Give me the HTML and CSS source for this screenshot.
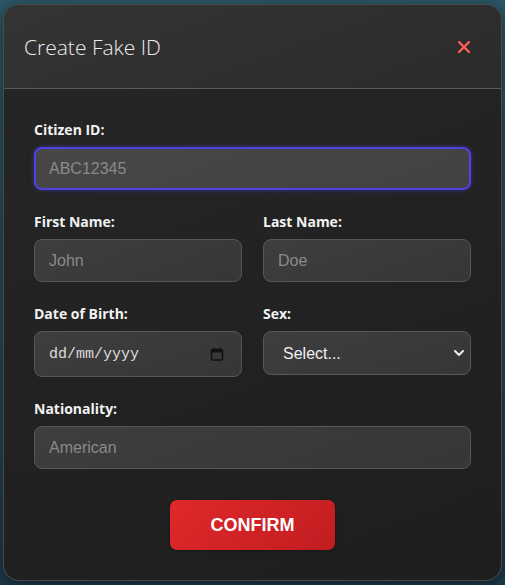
FILE: index.html
```html
<!DOCTYPE html>
<html lang="en">
<head>
  <meta charset="UTF-8">
  <title>Create Fake ID</title>
  <link rel="stylesheet" href="styles.css">
</head>
<body>
  <div class="modal">
    <div class="modal-header">
      <h2>Create Fake ID</h2>
      <button type="button" class="close-btn" aria-label="Close">
        <svg width="14" height="14" viewBox="0 0 14 14"><path d="M2 2L12 12M12 2L2 12" stroke="#ff5c5c" stroke-width="2.4" stroke-linecap="round"/></svg>
      </button>
    </div>
    <form class="modal-body" id="idForm">
      <div class="field">
        <label for="citizenId">Citizen ID:</label>
        <input type="text" id="citizenId" class="input focused" placeholder="ABC12345">
      </div>

      <div class="row">
        <div class="field">
          <label for="firstName">First Name:</label>
          <input type="text" id="firstName" class="input" placeholder="John">
        </div>
        <div class="field">
          <label for="lastName">Last Name:</label>
          <input type="text" id="lastName" class="input" placeholder="Doe">
        </div>
      </div>

      <div class="row">
        <div class="field">
          <label for="dob">Date of Birth:</label>
          <div class="input date-box">
            <input type="text" id="dob" class="date-text" placeholder="dd/mm/yyyy">
            <svg width="14" height="14" viewBox="0 0 14 14" class="cal-icon"><rect x="1.5" y="2.5" width="11" height="10.5" rx="1" fill="none" stroke="#111" stroke-width="1.6"/><rect x="1.5" y="2.5" width="11" height="3" fill="#111"/><path d="M4 0.8V3M10 0.8V3" stroke="#111" stroke-width="1.5"/></svg>
          </div>
        </div>
        <div class="field">
          <label for="sex">Sex:</label>
          <div class="select-wrap">
            <select id="sex" class="input select">
              <option value="">Select...</option>
              <option value="M">Male</option>
              <option value="F">Female</option>
            </select>
            <svg width="12" height="8" viewBox="0 0 12 8" class="chevron"><path d="M2 2L6 6L10 2" fill="none" stroke="#eee" stroke-width="2" stroke-linecap="round" stroke-linejoin="round"/></svg>
          </div>
        </div>
      </div>

      <div class="field">
        <label for="nationality">Nationality:</label>
        <input type="text" id="nationality" class="input" placeholder="American">
      </div>

      <div class="actions">
        <button type="button" class="confirm-btn">CONFIRM</button>
      </div>
    </form>
  </div>
</body>
</html>
```

FILE: styles.css
```css
html, body {
  margin: 0;
  height: 100%;
}
body {
  background: linear-gradient(180deg, #2c5767 0%, #24485a 60%, #1d3b4a 100%);
  font-family: "Liberation Sans", Arial, sans-serif;
  padding: 4px 3px;
  box-sizing: border-box;
}
.modal {
  width: 499px;
  height: 577px;
  box-sizing: border-box;
  border: 1px solid #4a4a4a;
  border-radius: 16px;
  overflow: hidden;
  background: linear-gradient(160deg, #262626 0%, #1e1e1e 100%);
  box-shadow: 0 4px 16px rgba(0,0,0,0.5);
}
.modal-header {
  height: 84px;
  box-sizing: border-box;
  display: flex;
  align-items: center;
  justify-content: space-between;
  padding: 0 30px 0 20px;
  background: linear-gradient(160deg, #343434 0%, #2b2b2b 100%);
  border-bottom: 1px solid #5a5a5a;
}
.modal-header h2 {
  margin: 0;
  font-family: "Open Sans", sans-serif;
  font-weight: 300;
  font-size: 21px;
  color: #ececec;
}
.close-btn {
  background: none;
  border: none;
  padding: 0;
  width: 14px;
  height: 14px;
  cursor: pointer;
  display: flex;
}
.modal-body {
  padding: 31px 30px 0;
  margin: 0;
}
.field {
  display: flex;
  flex-direction: column;
  margin-bottom: 22px;
  min-width: 0;
}
label {
  font-family: "Open Sans", sans-serif;
  font-weight: 700;
  font-size: 14px;
  line-height: 20px;
  color: #f2f2f2;
  margin-bottom: 7px;
}
.row {
  display: grid;
  grid-template-columns: minmax(0, 1fr) minmax(0, 1fr);
  column-gap: 21px;
  align-items: start;
}
.input {
  height: 43px;
  box-sizing: border-box;
  width: 100%;
  padding: 0 14px;
  background: linear-gradient(160deg, #3e3e3e 0%, #363636 100%);
  border: 1px solid #575757;
  border-radius: 8px;
  color: #eee;
  font-family: "Liberation Sans", Arial, sans-serif;
  font-size: 16px;
  outline: none;
}
.input::placeholder {
  color: #8a8a8a;
}
.input.focused {
  background: linear-gradient(160deg, #474747 0%, #424242 100%);
  border: 2px solid #4f42e0;
  padding: 0 13px;
  box-shadow: 0 0 4px rgba(80,66,224,0.6);
}
.date-box {
  height: 46px;
  display: flex;
  align-items: center;
  padding: 0 17px 0 14px;
}
.date-text {
  flex: 1;
  min-width: 0;
  background: none;
  border: none;
  outline: none;
  padding: 0;
  font-family: "Liberation Mono", monospace;
  font-size: 15px;
  color: #ddd;
}
.date-text::placeholder {
  color: #dcdcdc;
}
.cal-icon {
  flex-shrink: 0;
}
.select-wrap {
  display: grid;
  align-items: center;
}
.select-wrap > * {
  grid-area: 1 / 1;
}
.select {
  height: 44px;
  appearance: none;
  -webkit-appearance: none;
  padding: 0 30px 0 19px;
  color: #f0f0f0;
  cursor: pointer;
}
.chevron {
  justify-self: end;
  margin-right: 6px;
  pointer-events: none;
}
.actions {
  display: flex;
  justify-content: center;
  padding-top: 9px;
}
.confirm-btn {
  width: 165px;
  height: 50px;
  border: none;
  border-radius: 7px;
  background: linear-gradient(135deg, #e0282a 0%, #c11d21 100%);
  color: #fff;
  font-family: "Liberation Sans", Arial, sans-serif;
  font-weight: 700;
  font-size: 18px;
  cursor: pointer;
  box-shadow: 0 1px 3px rgba(0,0,0,0.3);
}
```
